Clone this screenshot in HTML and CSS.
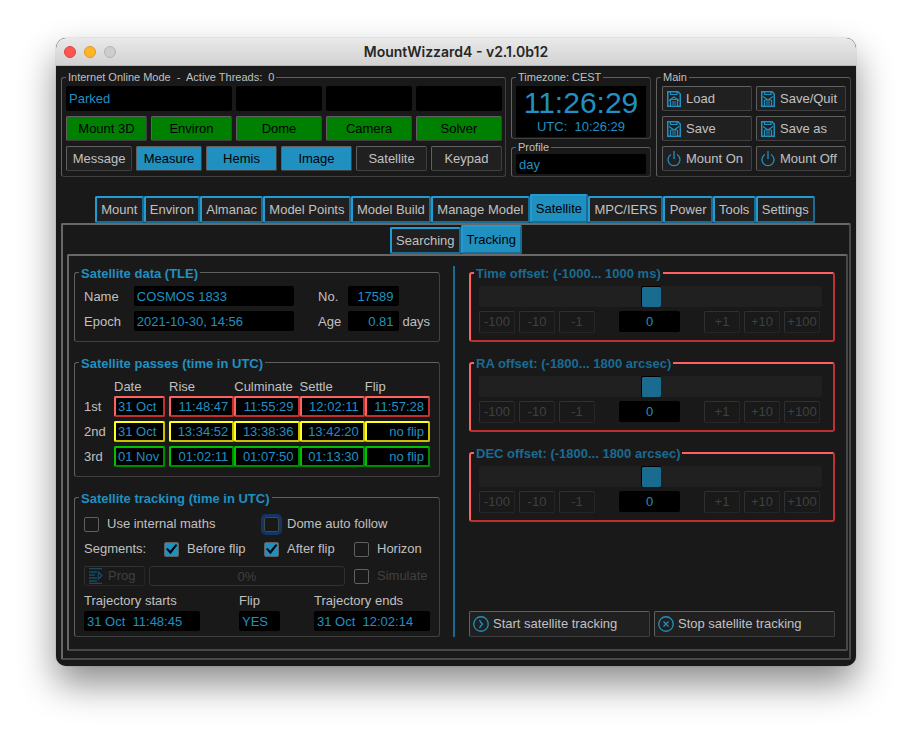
FILE: index.html
```html
<!DOCTYPE html>
<html lang="en">
<head>
<meta charset="utf-8">
<title>MountWizzard4 - v2.1.0b12</title>
<link rel="stylesheet" href="styles.css">
</head>
<body>
<svg class="sprite" aria-hidden="true">
  <symbol id="i-load" viewBox="0 0 14 16"><path d="M.75.75H11L13.25 3v12.25H.75z" stroke-width="1.5"/><path d="M3.5 1v2.500h6.500V1M2 9.500l5-3.500 5 3.500M3.500 9v6M10.500 9v6M4 8.500h6M5 11h4M5 13h4" stroke-width="1.200"/></symbol>
  <symbol id="i-save" viewBox="0 0 14 16"><path d="M.75.75H11L13.25 3v12.25H.75z" stroke-width="1.5"/><path d="M3.500 1v2.500h6.500V1M2 5.500l5 3.500 5-3.500M3.500 9v6M10.500 9v6M3.500 9h7M5 11h4M5 13h4" stroke-width="1.200"/></symbol>
  <symbol id="i-power" viewBox="0 0 14 16"><path d="M4 3.500a6 6 0 1 0 6 0M7 0v8" stroke-width="1.300"/></symbol>
  <symbol id="i-start" viewBox="0 0 16 16"><circle cx="8" cy="8" r="7.250" stroke-width="1.300"/><path d="M6.500 4q1 2.500 3 4-2 1.500-3 4" stroke-width="1.300"/></symbol>
  <symbol id="i-stop" viewBox="0 0 16 16"><circle cx="8" cy="8" r="7.250" stroke-width="1.300"/><path d="M5.500 5.500l5 5M10.500 5.500l-5 5" stroke-width="1.300"/></symbol>
  <symbol id="i-prog" viewBox="0 0 14 16"><path d="M0 .5h13M0 4h8M0 7h6M0 10h8M0 13h8M0 15.500h13M9.500 4v7L13 7.500z" stroke-width="1.300"/></symbol>
</svg>
<main class="window">
  <header class="titlebar">
    <div class="lights"><i class="light light--close"></i><i class="light light--min"></i><i class="light"></i></div>
    <h1>MountWizzard4 - v2.1.0b12</h1>
  </header>
  <div class="content">
    <section class="top">
      <fieldset class="group group--status">
        <legend>Internet Online Mode&nbsp; -&nbsp; Active Threads:&nbsp; 0</legend>
        <div class="rows">
          <div class="row row--status">
            <output class="readout readout--wide">Parked</output><output class="readout"></output><output class="readout"></output><output class="readout"></output>
          </div>
          <div class="row row--devices">
            <button class="btn btn--green">Mount 3D</button><button class="btn btn--green">Environ</button><button class="btn btn--green">Dome</button><button class="btn btn--green">Camera</button><button class="btn btn--green">Solver</button>
          </div>
          <div class="row row--windows">
            <button class="btn">Message</button><button class="btn btn--blue">Measure</button><button class="btn btn--blue">Hemis</button><button class="btn btn--blue">Image</button><button class="btn">Satellite</button><button class="btn">Keypad</button>
          </div>
        </div>
      </fieldset>
      <div class="clock-col">
        <fieldset class="group group--tight">
          <legend>Timezone: CEST</legend>
          <output class="clock">11:26:29</output>
          <output class="utc">UTC:&nbsp; 10:26:29</output>
        </fieldset>
        <fieldset class="group group--profile">
          <legend>Profile</legend>
          <output class="readout">day</output>
        </fieldset>
      </div>
      <fieldset class="group">
        <legend>Main</legend>
        <div class="actions">
          <button class="btn btn--icon"><svg><use href="#i-load"/></svg>Load</button>
          <button class="btn btn--icon"><svg><use href="#i-save"/></svg>Save/Quit</button>
          <button class="btn btn--icon"><svg><use href="#i-save"/></svg>Save</button>
          <button class="btn btn--icon"><svg><use href="#i-save"/></svg>Save as</button>
          <button class="btn btn--icon"><svg><use href="#i-power"/></svg>Mount On</button>
          <button class="btn btn--icon"><svg><use href="#i-power"/></svg>Mount Off</button>
        </div>
      </fieldset>
    </section>

    <nav class="tabs tabs--main">
      <button class="tab">Mount</button><button class="tab">Environ</button><button class="tab">Almanac</button><button class="tab">Model Points</button><button class="tab">Model Build</button><button class="tab">Manage Model</button><button class="tab tab--on">Satellite</button><button class="tab">MPC/IERS</button><button class="tab">Power</button><button class="tab">Tools</button><button class="tab">Settings</button>
    </nav>
    <section class="pane pane--outer">
      <nav class="tabs tabs--sub">
        <button class="tab">Searching</button><button class="tab tab--on">Tracking</button>
      </nav>
      <section class="pane pane--inner">
        <div class="column">
          <fieldset class="frame">
            <legend>Satellite data (TLE)</legend>
            <div class="tle">
              <label for="name">Name</label><input id="name" class="readout" readonly value="COSMOS 1833">
              <label class="second" for="no">No.</label><input id="no" class="readout readout--right" readonly value="17589"><span></span>
              <label for="epoch">Epoch</label><input id="epoch" class="readout" readonly value="2021-10-30, 14:56">
              <label class="second" for="age">Age</label><input id="age" class="readout readout--right" readonly value="0.81"><span class="unit">days</span>
            </div>
          </fieldset>
          <fieldset class="frame frame--passes">
            <legend>Satellite passes (time in UTC)</legend>
            <table class="passes">
              <colgroup><col class="c-label"><col class="c-date"><col class="c-time"><col class="c-time"><col class="c-time"><col class="c-time"></colgroup>
              <thead><tr><td></td><th>Date</th><th>Rise</th><th>Culminate</th><th>Settle</th><th>Flip</th></tr></thead>
              <tbody>
                <tr class="red"><th>1st</th><td><div>31 Oct</div></td><td><div>11:48:47</div></td><td><div>11:55:29</div></td><td><div>12:02:11</div></td><td><div>11:57:28</div></td></tr>
                <tr class="yellow"><th>2nd</th><td><div>31 Oct</div></td><td><div>13:34:52</div></td><td><div>13:38:36</div></td><td><div>13:42:20</div></td><td><div>no flip</div></td></tr>
                <tr class="green"><th>3rd</th><td><div>01 Nov</div></td><td><div>01:02:11</div></td><td><div>01:07:50</div></td><td><div>01:13:30</div></td><td><div>no flip</div></td></tr>
              </tbody>
            </table>
          </fieldset>
          <fieldset class="frame frame--last">
            <legend>Satellite tracking (time in UTC)</legend>
            <div class="options">
              <label class="check check--span"><input type="checkbox">Use internal maths</label>
              <label class="check check--span"><input type="checkbox" class="focused">Dome auto follow</label>
              <span>Segments:</span>
              <label class="check"><input type="checkbox" checked>Before flip</label>
              <label class="check"><input type="checkbox" checked>After flip</label>
              <label class="check"><input type="checkbox">Horizon</label>
              <div class="program">
                <button class="btn btn--icon btn--prog" disabled><svg><use href="#i-prog"/></svg>Prog</button>
                <div class="progress" role="progressbar" aria-valuenow="0">0%</div>
              </div>
              <label class="check check--off"><input type="checkbox" disabled>Simulate</label>
            </div>
            <div class="trajectory">
              <label>Trajectory starts<input class="readout" readonly value="31 Oct&nbsp; 11:48:45"></label>
              <label>Flip<input class="readout" readonly value="YES"></label>
              <label>Trajectory ends<input class="readout" readonly value="31 Oct&nbsp; 12:02:14"></label>
            </div>
          </fieldset>
        </div>
        <div class="divider"></div>
        <div class="column">
          <fieldset class="frame frame--alert">
            <legend>Time offset: (-1000... 1000 ms)</legend>
            <input type="range" min="-1000" max="1000" value="0" aria-label="Time offset" disabled>
            <div class="nudges">
              <div class="steps"><button class="btn" disabled>-100</button><button class="btn" disabled>-10</button><button class="btn" disabled>-1</button></div>
              <output class="readout">0</output>
              <div class="steps"><button class="btn" disabled>+1</button><button class="btn" disabled>+10</button><button class="btn" disabled>+100</button></div>
            </div>
          </fieldset>
          <fieldset class="frame frame--alert">
            <legend>RA offset: (-1800... 1800 arcsec)</legend>
            <input type="range" min="-1800" max="1800" value="0" aria-label="RA offset" disabled>
            <div class="nudges">
              <div class="steps"><button class="btn" disabled>-100</button><button class="btn" disabled>-10</button><button class="btn" disabled>-1</button></div>
              <output class="readout">0</output>
              <div class="steps"><button class="btn" disabled>+1</button><button class="btn" disabled>+10</button><button class="btn" disabled>+100</button></div>
            </div>
          </fieldset>
          <fieldset class="frame frame--alert">
            <legend>DEC offset: (-1800... 1800 arcsec)</legend>
            <input type="range" min="-1800" max="1800" value="0" aria-label="DEC offset" disabled>
            <div class="nudges">
              <div class="steps"><button class="btn" disabled>-100</button><button class="btn" disabled>-10</button><button class="btn" disabled>-1</button></div>
              <output class="readout">0</output>
              <div class="steps"><button class="btn" disabled>+1</button><button class="btn" disabled>+10</button><button class="btn" disabled>+100</button></div>
            </div>
          </fieldset>
          <div class="controls">
            <button class="btn btn--icon"><svg><use href="#i-start"/></svg>Start satellite tracking</button>
            <button class="btn btn--icon"><svg><use href="#i-stop"/></svg>Stop satellite tracking</button>
          </div>
        </div>
      </section>
    </section>
  </div>
</main>
</body>
</html>
```

FILE: styles.css
```css
:root {
  --bg: #191919;
  --face: #202020;
  --text: #c0c0c0;
  --blue: #2090c0;
  --blue-dark: #196b93;
  --edge: #606060;
  --edge-dark: #404040;
}

* { box-sizing: border-box; }

body {
  margin: 0;
  padding: 38px 56px 60px;
  background: #fff;
  color: var(--text);
  font: 13px/20px "Liberation Sans", Arial, sans-serif;
}

button, input { font: inherit; margin: 0; }
fieldset { margin: 0; min-width: 0; }
.sprite { display: none; }

svg {
  flex: none;
  width: 16px;
  height: 16px;
  fill: none;
  stroke: var(--blue);
}

/* window */
.window {
  border-radius: 10px;
  background: var(--bg);
  box-shadow: 0 0 1px rgba(0, 0, 0, .5), 0 18px 36px rgba(0, 0, 0, .45);
  overflow: hidden;
}

.titlebar {
  display: grid;
  grid-template-columns: 1fr auto 1fr;
  align-items: center;
  height: 28px;
  padding: 0 8px;
  border-bottom: 1px solid #b4b4b4;
  background: linear-gradient(#e9e9e9, #d2d2d2);
}

.titlebar h1 {
  margin: 0;
  color: #262626;
  font: 600 14px/20px Inter, sans-serif;
}

.lights { display: flex; gap: 8px; }

.light {
  width: 12px;
  height: 12px;
  border: 1px solid #b4b4b4;
  border-radius: 50%;
  background: #cdcdcd;
}
.light--close { border-color: #e2453f; background: #ff5650; }
.light--min { border-color: #e09a1d; background: #ffb429; }

.content { padding: 5px 5px 6px; }

/* shared controls */
.readout {
  display: block;
  width: 100%;
  min-width: 0;
  height: 20px;
  padding: 1px 3px 0;
  border: 0;
  border-radius: 2px;
  background: #000;
  color: var(--blue);
  line-height: 20px;
}
.readout--right { padding-right: 5px; text-align: right; }

.btn {
  min-width: 0;
  padding: 0;
  border: 1px solid var(--edge);
  border-right-color: var(--edge-dark);
  border-bottom-color: var(--edge-dark);
  border-radius: 2px;
  background: var(--face);
  color: var(--text);
  white-space: nowrap;
}
.btn--green { background: #008000; color: #000; }
.btn--blue { background: var(--blue); color: #000; }
.btn--icon {
  display: flex;
  align-items: center;
  gap: 4px;
  padding: 0 3px;
}
.btn:disabled {
  border-color: #303030 #262626 #262626 #303030;
  background: none;
  color: #404040;
}
.btn:disabled svg { stroke: #174c63; }

/* top groups */
.top {
  display: grid;
  grid-template-columns: 445fr 140fr 195fr;
  gap: 5px;
}

.group {
  padding: 2px 4px 5px;
  border: 1px solid var(--edge);
  border-color: var(--edge) var(--edge-dark) var(--edge-dark) var(--edge);
  border-radius: 3px;
}
.group legend { padding: 0 2px; font-size: 11px; line-height: 13px; }
.group--status { padding-right: 3px; }
.group--tight { padding-bottom: 1px; }
.group--profile { padding-top: 0; padding-bottom: 2px; }

.rows { display: grid; gap: 5px; }
.row { display: grid; gap: 4px; height: 25px; }
.row .readout { height: 25px; padding-top: 0; line-height: 25px; }
.row--status { grid-template-columns: 166fr 86fr 86fr 86fr; }
.row--devices { grid-template-columns: 81fr 81fr 86fr 86fr 86fr; }
.row--windows { grid-template-columns: 66fr 66fr 71fr 71fr 71fr 71fr; }

.clock-col { display: grid; align-content: start; gap: 2px; }
.clock, .utc { display: block; background: #000; color: var(--blue); text-align: center; }
.clock { height: 31px; font-size: 30px; line-height: 33px; }
.utc { height: 20px; }

.actions {
  display: grid;
  grid-template-columns: 1fr 1fr;
  grid-auto-rows: 25px;
  gap: 5px 4px;
  padding: 0 0 0 1px;
}

/* tabs */
.tabs { display: flex; align-items: flex-end; }
.tabs--main { margin: 17px 36px 0 34px; }
.tabs--sub { justify-content: center; margin-right: 3px; }

.tab {
  height: 27px;
  padding: 0 4px;
  border: 2px solid #229bd3;
  border-right-color: var(--blue-dark);
  border-bottom-color: var(--blue-dark);
  border-radius: 2px;
  background: var(--face);
  color: var(--text);
  white-space: nowrap;
}
.tabs--main .tab { flex: 1 1 auto; }
.tab--on { height: 29px; background: var(--blue); color: #000; }

.pane {
  border: 2px solid #686868;
  border-right-color: #484848;
  border-bottom-color: #484848;
  border-radius: 2px;
}
.pane--outer { padding: 0 1px 7px 4px; }
.pane--inner {
  display: grid;
  grid-template-columns: 366fr 29px 366fr;
  padding: 10px 11px 12px 5px;
}

.divider { margin: 0 14px 0 13px; background: var(--blue-dark); }

.column { display: flex; flex-direction: column; gap: 14px; }

.frame {
  padding: 7px 9px 10px;
  border: 1px solid var(--edge);
  border-color: var(--edge) var(--edge-dark) var(--edge-dark) var(--edge);
  border-radius: 3px;
}
.frame legend {
  margin-left: -5px;
  padding: 2px 2px 0;
  color: var(--blue);
  font-weight: 700;
  line-height: 11px;
}
.frame--passes { padding-bottom: 9px; }
.frame--last { padding-bottom: 5px; }

.tle {
  display: grid;
  grid-template-columns: 50fr 161fr 54fr 51fr 30fr;
  row-gap: 5px;
}
.tle label, .unit { height: 20px; padding-top: 1px; }
.tle .second { padding-left: 24px; }
.unit { padding-left: 4px; }

/* passes */
.passes { width: 100%; border-collapse: collapse; table-layout: fixed; }
.passes th { padding: 0; font-weight: 400; text-align: left; }
.passes thead th { padding-top: 1px; line-height: 19px; }
.passes td { padding: 0 0 4px; }
.passes tbody th { padding-bottom: 4px; }
.passes tr:last-child td, .passes tr:last-child th { padding-bottom: 0; }
.passes td:nth-child(2) { padding-right: 4px; }
.c-label { width: 30px; }
.c-date { width: 55px; }
.passes div {
  height: 21px;
  padding-right: 4px;
  border: 2px solid;
  border-radius: 2px;
  background: #000;
  color: var(--blue);
  line-height: 17px;
  text-align: right;
}
.passes td:nth-child(2) div { padding: 0 0 0 2px; text-align: left; }
.red div { border-color: #ff6060 #c03030 #c03030 #ff6060; }
.yellow div { border-color: #ffff20 #c8c000 #c8c000 #ffff20; }
.green div { border-color: #00c000 #008a00 #008a00 #00c000; }

/* tracking options */
.options {
  display: grid;
  grid-template-columns: 80fr 100fr 90fr 76fr;
  grid-template-rows: 25px 27px 20px;
  margin-top: 3px;
}
.options > * { white-space: nowrap; height: 20px; }
.check { display: flex; align-items: center; gap: 8px; }
.check--span { grid-column: span 2; }
.check--off { color: #404040; }
.check input {
  appearance: none;
  display: grid;
  width: 15px;
  height: 15px;
  border: 1px solid var(--edge);
  border-radius: 2px;
}
.check input:checked { background: var(--blue); }
.check input:checked::before {
  content: "";
  background: #000;
  clip-path: polygon(8% 50%, 20% 42%, 40% 64%, 82% 14%, 96% 20%, 42% 90%);
}
.check .focused { border-color: #484848; box-shadow: 0 0 0 3px #123468; }

.program { grid-column: span 3; display: flex; gap: 4px; padding-right: 9px; }
.btn--prog { width: 61px; }
.progress {
  flex: 1;
  border: 1px solid #303030;
  border-radius: 3px;
  color: #404040;
  line-height: 19px;
  text-align: center;
}

.trajectory {
  display: grid;
  grid-template-columns: 155fr 75fr 116fr;
  margin-top: 5px;
}
.trajectory label { padding-right: 39px; white-space: nowrap; }
.trajectory label + label { padding-right: 34px; }
.trajectory label:last-child { padding-right: 0; }

/* offsets */
.frame--alert {
  padding: 6px 11px 8px 8px;
  border: 2px solid #ff6060;
  border-right-color: #c03030;
  border-bottom-color: #c03030;
}
.frame--alert legend { color: var(--blue-dark); line-height: 12px; }

input[type="range"] {
  appearance: none;
  display: block;
  width: 100%;
  height: 21px;
  border-radius: 2px;
  background: var(--face);
}
input[type="range"]::-webkit-slider-thumb {
  appearance: none;
  width: 20px;
  height: 21px;
  border: 0 solid #000;
  border-width: 1px 0 0 1px;
  border-radius: 2px;
  background: #196b8f;
}

.nudges {
  display: flex;
  justify-content: space-between;
  height: 21px;
  margin-top: 4px;
  padding-right: 2px;
}
.nudges .readout { width: 61px; height: 21px; text-align: center; }
.steps { display: grid; grid-template-columns: repeat(3, 36px); gap: 4px; }

.controls {
  display: grid;
  grid-template-columns: 1fr 1fr;
  grid-auto-rows: 26px;
  gap: 4px;
  margin-top: auto;
}
```
